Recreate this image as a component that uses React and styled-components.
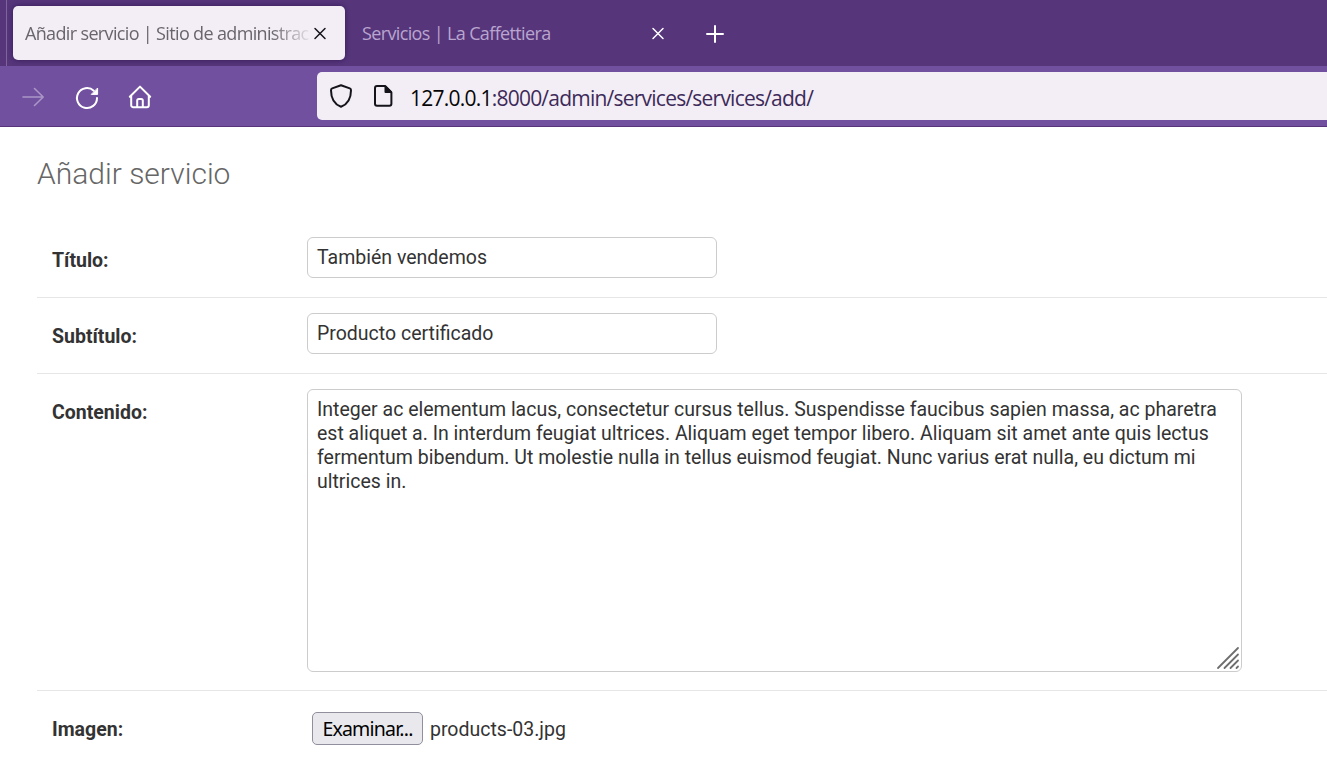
import React from 'react';
import styled, { createGlobalStyle } from 'styled-components';

const Global = createGlobalStyle`
  * { box-sizing: border-box; }
  body { margin: 0; background: #fff; overflow: hidden; }
`;

const chromeFont = '"Noto Sans", "Open Sans", sans-serif';
const tabFont = '"Open Sans", "Noto Sans", sans-serif';
const pageFont = 'Roboto, "Liberation Sans", sans-serif';

const Window = styled.div`
  height: 757px;
  overflow: hidden;
  display: flex;
  flex-direction: column;
  font-family: ${pageFont};
  color: #333;
`;

const TabStrip = styled.div`
  flex: none;
  height: 66px;
  padding-top: 6px;
  display: flex;
  align-items: flex-start;
  background: #56357b;
`;

const Separator = styled.div`
  width: 1px;
  height: 66px;
  margin: -6px 6px 0;
  background: #7d6499;
`;

const Tab = styled.div`
  width: ${(p) => p.$width}px;
  height: 54px;
  padding-left: ${(p) => p.$start}px;
  padding-right: ${(p) => p.$end}px;
  display: flex;
  align-items: center;
  border-radius: 5px;
  color: ${(p) => (p.$active ? '#15141a' : '#fff')};
  background: ${(p) => (p.$active ? '#f3eef5' : 'transparent')};
  box-shadow: ${(p) => (p.$active ? '0 0 5px rgba(30, 10, 60, 0.6)' : 'none')};
`;

const TabTitle = styled.span`
  flex: 1;
  min-width: 0;
  overflow: hidden;
  white-space: nowrap;
  font: 400 18px/28px ${tabFont};
  letter-spacing: ${(p) => p.$tracking}px;
  color: ${(p) => (p.$active ? '#69656d' : '#b9a5cf')};
  mask-image: ${(p) => (p.$active ? 'linear-gradient(to left, transparent, #000 42px)' : 'none')};
`;

const NewTab = styled.div`
  margin: 18px 0 0 27.5px;
  height: 20px;
`;

const Toolbar = styled.div`
  flex: none;
  height: 61px;
  padding: 6px 0 0 21px;
  display: flex;
  background: #7150a0;
  border-bottom: 1px solid #56357b;
`;

const NavButtons = styled.div`
  width: 296px;
  height: 50px;
  display: flex;
  align-items: center;
  gap: 29.5px;
`;

const AddressBar = styled.div`
  flex: 1;
  height: 48px;
  padding-left: 12px;
  display: flex;
  align-items: center;
  border-radius: 5px 0 0 5px;
  background: #f3eef5;
`;

const Url = styled.span`
  margin-left: 15px;
  padding-top: 3px;
  white-space: nowrap;
  font: 400 21px/30px ${tabFont};
  letter-spacing: ${(p) => p.$tracking}px;
  color: #3d2a5a;
`;

const Host = styled.span`
  color: #050506;
`;

const Icon = styled.svg`
  display: block;
  flex: none;
  overflow: visible;
  fill: none;
  stroke: currentColor;
  stroke-width: ${(p) => p.$weight || 2};
  stroke-linecap: round;
  stroke-linejoin: round;
  color: ${(p) => p.$color || 'inherit'};
  margin-left: ${(p) => p.$left || 0}px;
`;

const Content = styled.main`
  flex: 1;
  padding: 29px 0 0 37px;
`;

const Heading = styled.h1`
  margin: 0 0 31px;
  font: 300 30px/35px ${pageFont};
  color: #666;
`;

const FormRow = styled.div`
  display: flex;
  align-items: flex-start;
  height: ${(p) => p.$height}px;
  padding: 15px 0 0 15px;
  border-bottom: 1px solid #e6e6e6;
`;

const Label = styled.label`
  width: 255px;
  padding-top: 12px;
  font: 700 19.5px/24px ${pageFont};
  color: #333;
`;

const TextInput = styled.input`
  width: 410px;
  height: 41px;
  padding: 0 9px;
  border: 1px solid #ccc;
  border-radius: 6px;
  outline: none;
  font: 400 19.5px/24px ${pageFont};
  color: #333;
`;

const TextBox = styled.div`
  position: relative;
  width: 935px;
  height: 283px;
`;

const TextArea = styled.textarea`
  display: block;
  width: 100%;
  height: 100%;
  padding: 8px 9px;
  border: 1px solid #ccc;
  border-radius: 6px;
  outline: none;
  resize: none;
  overflow: hidden;
  font: 400 19.5px/24px ${pageFont};
  color: #333;
`;

const Grip = styled(Icon)`
  position: absolute;
  right: 3px;
  bottom: 3px;
`;

const FileField = styled.div`
  display: flex;
  align-items: center;
  gap: 7px;
  padding: 6px 0 0 5px;
  font: 400 19.5px/24px ${pageFont};
`;

const FileName = styled.span`
  padding-top: 2px;
`;

const FileButton = styled.button`
  width: 111px;
  height: 33px;
  padding: 1px 0 0;
  border: 1px solid #8f8f9d;
  border-radius: 5px;
  background: #e9e9ed;
  font: 400 19.5px/24px ${chromeFont};
  letter-spacing: -0.8px;
  color: #000;
  white-space: nowrap;
`;

const CloseIcon = ({ left }) => (
  <Icon width="12" height="12" viewBox="0 0 12 12" $weight={1.5} $left={left}>
    <path d="M1 1.5 11 11.5M11 1.5 1 11.5" />
  </Icon>
);

const lorem =
  'Integer ac elementum lacus, consectetur cursus tellus. Suspendisse faucibus sapien massa, ac pharetra est aliquet a. In interdum feugiat ultrices. Aliquam eget tempor libero. Aliquam sit amet ante quis lectus fermentum bibendum. Ut molestie nulla in tellus euismod feugiat. Nunc varius erat nulla, eu dictum mi ultrices in.';

export default function App() {
  return (
    <Window>
      <Global />
      <TabStrip>
        <Separator />
        <Tab $active $width={332} $start={12} $end={19}>
          <TabTitle $active $tracking={-0.65}>Añadir servicio | Sitio de administrac</TabTitle>
          <CloseIcon left={1} />
        </Tab>
        <Tab $width={332} $start={17} $end={13}>
          <TabTitle $tracking={-0.64}>Servicios | La Caffettiera</TabTitle>
          <CloseIcon left={0} />
        </Tab>
        <NewTab>
          <Icon width="20" height="20" viewBox="0 0 20 20" $color="#fff">
            <path d="M10 2v16M2 10h16" />
          </Icon>
        </NewTab>
      </TabStrip>
      <Toolbar>
        <NavButtons>
          <Icon width="24" height="24" viewBox="0 0 24 24" $color="#aa96c6" $weight={1.6}>
            <path d="M2 12h20M13.5 3.5l8.7 8.5-8.7 8.5" />
          </Icon>
          <Icon width="24" height="24" viewBox="0 0 24 24" $color="#fff">
            <path d="M22 13A10 10 0 1 1 18.8 5.7" />
            <path d="M22.6 3.4v6h-6z" fill="currentColor" strokeWidth="1" />
          </Icon>
          <Icon width="24" height="24" viewBox="0 0 24 24" $color="#fff">
            <path d="M1.8 11.8 12 1.6 22.2 11.8M3.2 10.5v9.7a2 2 0 0 0 2 2h13.6a2 2 0 0 0 2-2v-9.7" />
            <path d="M9.2 22v-6.4a1.6 1.6 0 0 1 1.6-1.6h2.4a1.6 1.6 0 0 1 1.6 1.6V22" />
          </Icon>
        </NavButtons>
        <AddressBar>
          <Icon width="24" height="24" viewBox="0 0 24 24" $color="#15141a">
            <path d="M12 1.2 20.8 4.4Q22 4.9 22 6.2C22 14 19 20 12 22.8 5 20 2 14 2 6.2Q2 4.9 3.2 4.4Z" />
          </Icon>
          <Icon width="24" height="24" viewBox="0 0 24 24" $color="#15141a" $left={18}>
            <path d="M14 2H6a2 2 0 0 0-2 2v15.8a2 2 0 0 0 2 2h12.4a2 2 0 0 0 2-2V8.4z" />
            <path d="M14.5 2.5v5.5H20z" fill="currentColor" />
          </Icon>
          <Url $tracking={-0.77}>
            <Host>127.0.0.1</Host>:8000/admin/services/services/add/
          </Url>
        </AddressBar>
      </Toolbar>
      <Content>
        <Heading>Añadir servicio</Heading>
        <FormRow $height={76}>
          <Label>Título:</Label>
          <TextInput defaultValue="También vendemos" />
        </FormRow>
        <FormRow $height={76}>
          <Label>Subtítulo:</Label>
          <TextInput defaultValue="Producto certificado" />
        </FormRow>
        <FormRow $height={317}>
          <Label>Contenido:</Label>
          <TextBox>
            <TextArea spellCheck={false} defaultValue={lorem} />
            <Grip width="22" height="22" viewBox="0 0 22 22" $color="#6e6e6e" $weight={1.8}>
              <path d="M1 21 21 1M7.5 21 21 7.5M13.5 21 21 13.5M19.5 21 21 19.5" />
            </Grip>
          </TextBox>
        </FormRow>
        <FormRow $height={90}>
          <Label>Imagen:</Label>
          <FileField>
            <FileButton type="button">Examinar...</FileButton>
            <FileName>products-03.jpg</FileName>
          </FileField>
        </FormRow>
      </Content>
    </Window>
  );
}
